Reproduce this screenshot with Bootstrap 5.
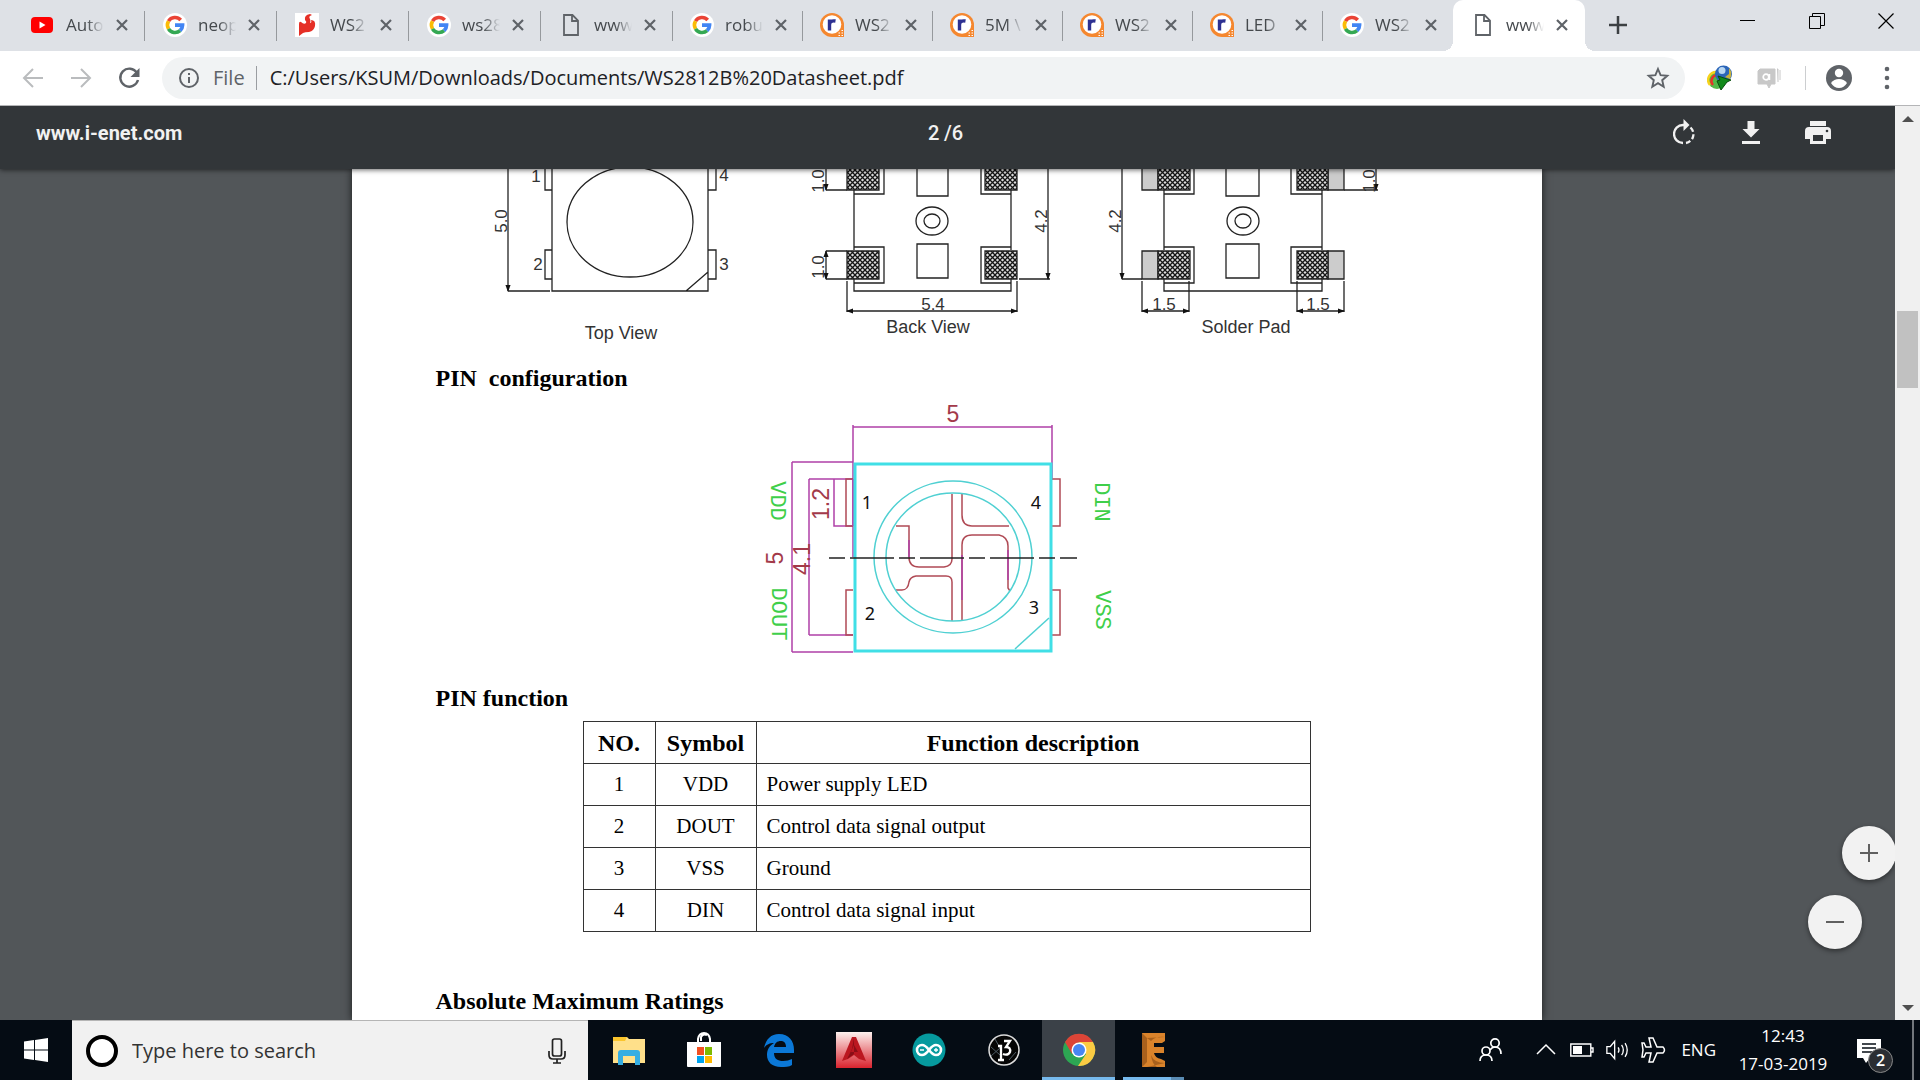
<!DOCTYPE html>
<html lang="en">
<head>
<meta charset="utf-8">
<meta name="viewport" content="width=device-width, initial-scale=1">
<title>WS2812B Datasheet.pdf</title>
<link href="https://cdn.jsdelivr.net/npm/bootstrap@5.3.0/dist/css/bootstrap.min.css" rel="stylesheet">
<style>
body{font-family:"Open Sans","Noto Sans",sans-serif;color:#202124;background:#525659}
svg{display:block;flex:none}
button{border:0;background:none;padding:0;color:inherit}
.tabstrip{height:51px;background:#dee1e6;padding-left:13px}
.tab{width:130px;height:51px;padding:0 15px 2px 17px;position:relative;color:#5f6368}
.tab.wide{width:132px;padding-left:18px}
.tab::after{content:"";position:absolute;right:0;top:11px;height:30px;width:1px;background:#96999d}
.tab.last::after{display:none}
.tab .fav{width:24px;height:24px}
.tab a{width:38px;margin:0 11px;font-size:17px;line-height:24px;overflow:hidden;white-space:nowrap;color:#45494d;text-decoration:none;-webkit-mask-image:linear-gradient(90deg,#000 55%,transparent);mask-image:linear-gradient(90deg,#000 55%,transparent)}
.tab.on{background:#fff;border-radius:10px 10px 0 0}
.tab.on::after,.tab.on::before{content:"";display:block;position:absolute;top:auto;bottom:0;width:10px;height:10px;background:radial-gradient(circle at 0 0,transparent 10px,#fff 10px)}
.tab.on::before{left:-10px}
.tab.on::after{right:-10px;background:radial-gradient(circle at 100% 0,transparent 10px,#fff 10px)}
.newtab{margin:0 0 2px 24px}
.winbtn{width:69px;height:42px;color:#000}
.addr{height:55px;background:#fff;border-bottom:1px solid #b4b5b7;color:#5f6368;padding-bottom:1px}
.navbtns{width:162px;padding-left:21px;gap:24px}
.omni{height:42px;border-radius:21px;background:#f1f3f4;padding:0 15px 0 15px}
.omni input{border:0;background:transparent;outline:0;font-size:20px;color:#202124;padding:0;min-width:0;margin-left:13px}
.omni .scheme{font-size:20px;margin:0 11px 0 12px}
.vline{width:1px;height:24px;background:#9a9da1}
.exts{width:235px;padding-left:22px}
.pdfbar{height:63px;background:#323639;color:#f1f1f1;font-family:Roboto,sans-serif;font-size:20px;padding:0 64px 10px 36px;box-shadow:0 1px 5px rgba(0,0,0,.6);z-index:3}
.pdfbar .doctitle{font-weight:700}
.pdfbar .pager{font-weight:500}
.pdfbar input{width:12px;border:0;padding:0;background:transparent;color:inherit;font:inherit}
.pdftools{gap:42px}
.viewer{min-height:0;background:#525659;padding-right:2px}
.sheet{width:1190px;max-width:100%;margin:0 auto;background:#fff;color:#000;font-family:"Liberation Serif",serif;box-shadow:0 0 8px rgba(0,0,0,.7);min-height:100%}
.sheet h2{font-size:24px;line-height:32px;font-weight:700;margin:16px 84px 0}
.sheet h2.gap-top{margin-top:53px}
.pins{width:728px;margin:7px 0 0 231px;border-collapse:collapse}
.pins th,.pins td{border:1px solid #333;height:42px;padding:0 10px;text-align:center;font-size:21px;line-height:30px}
.pins td{padding-bottom:2px}
.pins th{font-size:24px}
.pins td:last-child{text-align:left}
.figtext{font-family:"Liberation Sans",sans-serif;font-size:18px;fill:#333;text-anchor:middle}
.figtext .dim{font-size:17px}
.cad{font-family:"Liberation Mono",monospace;font-size:22px;text-anchor:middle}
.cad .dimred{font-family:"Liberation Sans",sans-serif;fill:#a33a4a;font-size:23px}
.cad .num{font-family:"Noto Sans",sans-serif;fill:#111;font-size:18px}
.sbar{width:25px;background:#f0f0f0;padding:8px 2px 7px;z-index:4}
.sbar .thumb{height:77px;background:#c1c1c1;margin-top:187px}
.zoombtn{position:absolute;width:54px;height:54px;border-radius:50%;background:#f2f2f2;color:#606060;box-shadow:0 2px 5px rgba(0,0,0,.45)}
.zin{right:-1px;bottom:140px}
.zout{right:33px;bottom:71px}
.taskbar{height:60px;background:#050c14;color:#fff}
.start{width:72px}
.search{width:516px;background:#f1f1f1;border-top:1px solid #b5b5b5;padding:0 22px 0 14px;color:#222;margin-right:4px}
.search input{border:0;background:transparent;outline:0;font-size:20px;padding:0;margin-left:14px;min-width:0}
.search input::placeholder{color:#333;opacity:1}
.app{width:73px;margin-right:2px;position:relative}
.app.run{background:#3b4148}
.app.run::after{content:"";position:absolute;left:0;right:0;bottom:0;height:3px;background:#76b9ed}
.app.multi::after{content:"";position:absolute;left:6px;width:61px;bottom:0;height:3px;background:linear-gradient(90deg,#76b9ed 48px,#5a8cb4 48px)}
.tray{font-size:17px;padding-right:6px}
.lang{margin:0 12px 0 15px}
.clock{width:110px;line-height:28px;text-align:center}
.note{position:relative;margin-left:19px;width:55px}
.note .count{position:absolute;left:11px;top:11px;width:25px;height:25px;border-radius:50%;background:#2b2e33;border:1px solid #888;font-size:16px;line-height:22px;font-weight:600;text-align:center}
.desk{width:2px;background:#72777c}
</style>
<script src="https://cdn.jsdelivr.net/npm/bootstrap@5.3.0/dist/js/bootstrap.bundle.min.js"></script>
</head>
<body class="vh-100 overflow-hidden d-flex flex-column">
<svg width="0" height="0" class="position-absolute" aria-hidden="true">
<defs>
<symbol id="x" viewBox="0 0 14 14"><path d="M2 2l10 10M12 2L2 12" stroke="#5f6368" stroke-width="2.2"/></symbol>
<symbol id="g" viewBox="0 0 24 24"><circle cx="12" cy="12" r="12" fill="#fff"/><g fill="none" stroke-width="3.6"><path d="M17.7 7A7.6 7.6 0 0 0 5.5 8.2" stroke="#ea4335"/><path d="M5.5 8.2a7.6 7.6 0 0 0 0 7.6" stroke="#fbbc05"/><path d="M5.5 15.8a7.6 7.6 0 0 0 11.6 1.8" stroke="#34a853"/><path d="M17.1 17.6a7.6 7.6 0 0 0 2.5-5.5H12" stroke="#4285f4"/></g></symbol>
<symbol id="r" viewBox="0 0 24 24"><path d="M12 0a12 12 0 1 0 0 24h12V12A12 12 0 0 0 12 0z" fill="#f5872f"/><circle cx="12" cy="11.500" r="9.300" fill="#fff"/><path d="M9.500 17.500V6.500M9.500 12q0-5 6-4" fill="none" stroke="#2e3192" stroke-width="3.400"/><path d="M18.500 20h1.500M21.500 20h1.500M18.500 22.500h1.500M21.500 22.500h1.500M21.500 17.500h1.500" stroke="#fff" stroke-width="1.200"/></symbol>
<symbol id="doc" viewBox="0 0 24 24"><path d="M5 2h8.500L19 7.500V22H5z M13 2v6h6" fill="none" stroke="#5f6368" stroke-width="1.800"/></symbol>
<pattern id="hatch" width="5" height="5" patternUnits="userSpaceOnUse"><rect width="5" height="5" fill="#ddd"/><path d="M0 0l5 5M5 0L0 5" stroke="#151515" stroke-width="1.300"/></pattern>
<marker id="ar" viewBox="0 0 8 8" refX="7" refY="4" markerWidth="7" markerHeight="7" markerUnits="userSpaceOnUse" orient="auto-start-reverse"><path d="M0 1l8 3-8 3z" fill="#111"/></marker>
</defs>
</svg>

<header>
<div class="tabstrip d-flex">
<div class="tab wide d-flex align-items-center"><svg class="fav" viewBox="0 0 24 24"><rect y="4" x="0" width="22" height="16" rx="4" fill="#f00"/><path d="M8.500 8.500l6 3.500-6 3.500z" fill="#fff"/></svg><a href="#">Auto</a><button aria-label="Close tab"><svg width="14" height="14"><use href="#x"/></svg></button></div>
<div class="tab wide d-flex align-items-center"><svg class="fav"><use href="#g"/></svg><a href="#">neop</a><button aria-label="Close tab"><svg width="14" height="14"><use href="#x"/></svg></button></div>
<div class="tab wide d-flex align-items-center"><svg class="fav" viewBox="0 0 24 24"><path fill="#fff" d="M0 0h24v24H0z"/><path d="M4 23V11q0-3 2-2 3 3 5 1 1-1-1-3-1-5 5-6l2 1q-4 1-2 4 1 2 0 4 2 0 1-3 5 0 4 6-1 5-6 6-4 0-6 1z" fill="#e52f26"/></svg><a href="#">WS2</a><button aria-label="Close tab"><svg width="14" height="14"><use href="#x"/></svg></button></div>
<div class="tab wide d-flex align-items-center"><svg class="fav"><use href="#g"/></svg><a href="#">ws28</a><button aria-label="Close tab"><svg width="14" height="14"><use href="#x"/></svg></button></div>
<div class="tab wide d-flex align-items-center"><svg class="fav"><use href="#doc"/></svg><a href="#">www</a><button aria-label="Close tab"><svg width="14" height="14"><use href="#x"/></svg></button></div>
<div class="tab d-flex align-items-center"><svg class="fav"><use href="#g"/></svg><a href="#">robu</a><button aria-label="Close tab"><svg width="14" height="14"><use href="#x"/></svg></button></div>
<div class="tab d-flex align-items-center"><svg class="fav"><use href="#r"/></svg><a href="#">WS2</a><button aria-label="Close tab"><svg width="14" height="14"><use href="#x"/></svg></button></div>
<div class="tab d-flex align-items-center"><svg class="fav"><use href="#r"/></svg><a href="#">5M \</a><button aria-label="Close tab"><svg width="14" height="14"><use href="#x"/></svg></button></div>
<div class="tab d-flex align-items-center"><svg class="fav"><use href="#r"/></svg><a href="#">WS2</a><button aria-label="Close tab"><svg width="14" height="14"><use href="#x"/></svg></button></div>
<div class="tab d-flex align-items-center"><svg class="fav"><use href="#r"/></svg><a href="#">LED</a><button aria-label="Close tab"><svg width="14" height="14"><use href="#x"/></svg></button></div>
<div class="tab last d-flex align-items-center"><svg class="fav"><use href="#g"/></svg><a href="#">WS2</a><button aria-label="Close tab"><svg width="14" height="14"><use href="#x"/></svg></button></div>
<div class="tab wide on d-flex align-items-center"><svg class="fav"><use href="#doc"/></svg><a href="#">www</a><button aria-label="Close tab"><svg width="14" height="14"><use href="#x"/></svg></button></div>
<button class="newtab" aria-label="New tab"><svg width="18" height="18" viewBox="0 0 18 18"><path d="M9 0v18M0 9h18" stroke="#3c4043" stroke-width="2.500"/></svg></button>
<div class="d-flex ms-auto">
<button class="winbtn d-flex align-items-center justify-content-center" aria-label="Minimize"><svg width="16" height="16"><path d="M0 7.500h15" stroke="#000"/></svg></button>
<button class="winbtn d-flex align-items-center justify-content-center" aria-label="Restore"><svg width="16" height="16"><path d="M.5 3.500h11v12H.5zM3.500 3V.5h12v12H12" fill="none" stroke="#000"/></svg></button>
<button class="winbtn d-flex align-items-center justify-content-center" aria-label="Close"><svg width="16" height="16"><path d="M.5.5l15 15M15.500.5l-15 15" stroke="#000" stroke-width="1.200"/></svg></button>
</div>
</div>

<div class="addr d-flex align-items-center">
<div class="navbtns d-flex align-items-center">
<button aria-label="Back"><svg width="24" height="24" viewBox="0 0 24 24" fill="none" stroke="#babcbe" stroke-width="2"><path d="M22 12H4M12 3l-9 9 9 9"/></svg></button>
<button aria-label="Forward"><svg width="24" height="24" viewBox="0 0 24 24" fill="none" stroke="#babcbe" stroke-width="2"><path d="M2 12h18M12 3l9 9-9 9"/></svg></button>
<button aria-label="Reload"><svg width="24" height="24" viewBox="0 0 24 24"><path d="M20 7A9 9 0 1 0 21 14" fill="none" stroke="#5f6368" stroke-width="2.400"/><path d="M22.500 2v9h-9z" fill="#5f6368"/></svg></button>
</div>
<div class="omni d-flex align-items-center flex-grow-1">
<svg width="24" height="24" viewBox="0 0 24 24"><circle cx="12" cy="12" r="9" fill="none" stroke="#5f6368" stroke-width="2"/><path d="M12 11v6M12 7v2" stroke="#5f6368" stroke-width="2"/></svg>
<label class="scheme" for="url">File</label><span class="vline"></span>
<input id="url" class="flex-grow-1" value="C:/Users/KSUM/Downloads/Documents/WS2812B%20Datasheet.pdf">
<button aria-label="Bookmark"><svg width="24" height="24" viewBox="0 0 24 24"><path d="M12 3l2.600 6.200 6.700.6-5.100 4.400 1.500 6.500L12 17.200l-5.700 3.500 1.500-6.500-5.100-4.400 6.700-.6z" fill="none" stroke="#5f6368" stroke-width="1.900"/></svg></button>
</div>
<div class="exts d-flex align-items-center">
<button aria-label="Download manager"><svg width="26" height="26" viewBox="0 0 26 26"><circle cx="10" cy="15" r="9" fill="#54b948"/><path d="M3 20A8 8 0 0 1 10 7" fill="none" stroke="#f6d21c" stroke-width="2.500"/><path d="M6 20a6 6 0 0 1 4-10" fill="none" stroke="#e6322a" stroke-width="2.500"/><circle cx="16.500" cy="9" r="8.500" fill="#2c66b8"/><circle cx="15" cy="5.500" r="3.500" fill="#b9d7f2"/><path d="M22 3q4 5 1 11l-5-2 4-3z" fill="#c9b23a"/><path d="M11 11l9 3 4 1-4 2-6 8-4-9 3-1z" fill="#128a1b" stroke="#074d0d"/></svg></button>
<button class="ms-4" aria-label="Extension"><svg width="24" height="24" viewBox="0 0 24 24"><path d="M3 3h15v15h-4l-2 4-2-4H1V5zM20 3h1v13M23 4v10" fill="#c8c8c8" stroke="#c8c8c8"/><circle cx="9" cy="11" r="2.800" fill="none" stroke="#fff" stroke-width="1.700"/><path d="M12.500 8v6" stroke="#fff" stroke-width="1.500"/></svg></button>
<span class="vline ms-4 me-2 opacity-50"></span>
<button class="ms-2" aria-label="Profile"><svg width="34" height="28" viewBox="0 0 34 28"><circle cx="17" cy="14" r="13" fill="#5f6368"/><circle cx="17" cy="9" r="4.200" fill="#fff"/><path d="M9 19q3-4 8-4t8 4q-3 5-8 5t-8-5" fill="#fff"/></svg></button>
<button class="ms-4" aria-label="Menu"><svg width="14" height="24" viewBox="0 0 14 24" fill="#5f6368"><circle cx="7" cy="3" r="2.300"/><circle cx="7" cy="12" r="2.300"/><circle cx="7" cy="21" r="2.300"/></svg></button>
</div>
</div>
</header>

<main class="d-flex flex-grow-1 overflow-hidden">
<div class="d-flex flex-column flex-grow-1 position-relative overflow-hidden">
<div class="pdfbar d-flex align-items-center flex-shrink-0">
<div class="doctitle col text-start">www.i-enet.com</div>
<div class="pager d-flex ms-4"><input id="pg" value="2" aria-label="Page"><label for="pg" class="ms-1">/6</label></div>
<div class="pdftools col d-flex justify-content-end">
<button aria-label="Rotate"><svg width="24" height="28" viewBox="0 0 24 28"><path d="M10 24a9 9 0 0 1 0-18h2" fill="none" stroke="#f1f1f1" stroke-width="2.300"/><path d="M10.500 0l6 6-6 6z" fill="#f1f1f1"/><path d="M17.500 8.500a9 9 0 0 1-4.500 15.500" fill="none" stroke="#f1f1f1" stroke-width="2.300" stroke-dasharray="5 2.500"/></svg></button>
<button aria-label="Download"><svg width="24" height="28" viewBox="0 0 24 28"><path d="M8.500 2h7v8h5L12 18.500 3.500 10h5zM3 22h18v3H3z" fill="#f1f1f1"/></svg></button>
<button aria-label="Print"><svg width="26" height="28" viewBox="0 0 26 28"><path d="M5 2h16v5H5zM4 8h18q4 0 4 4v8h-5v5H5v-5H0v-8q0-4 4-4zm4 8v6h10v-6z" fill="#f1f1f1" fill-rule="evenodd"/><circle cx="22" cy="12" r="1.300" fill="#323639"/></svg></button>
</div>
</div>

<div class="viewer flex-grow-1">
<article class="sheet">
<svg class="w-100" viewBox="352 169 1190 177" role="img" aria-label="LED package dimensions">
<g fill="none" stroke="#222" stroke-width="1.300">
<path d="M508 160V291" marker-end="url(#ar)"/><path d="M508 291h42M552 160v131h156V160M686 291l22-19M552 190h-7v-30M552 250h-7v29h7M708 190h8v-30M708 250h8v29h-8"/>
<ellipse cx="630" cy="222" rx="63" ry="55"/>
<path d="M854 190v60M854 279v12h157v-12M1011 190v60"/>
<path d="M854 194h30v-30M854 247h30v36h-30M1011 194h-30v-30M1011 247h-30v36h30"/>
<path d="M917 160v36h31v-36M917 244h31v34h-31z"/><ellipse cx="932" cy="221" rx="16" ry="14"/><ellipse cx="932" cy="221" rx="8" ry="7"/>
<path d="M826 190h21M826 251h21M826 279h21M847 281v31M1017 281v31M1019 279h31"/>
<path d="M826 160v30" marker-end="url(#ar)"/><path d="M826 251v28" marker-end="url(#ar)" marker-start="url(#ar)"/><path d="M847 311h170" marker-end="url(#ar)" marker-start="url(#ar)"/><path d="M1048 160v119" marker-end="url(#ar)"/>
<path d="M1122 160v119" marker-end="url(#ar)"/>
<path d="M1164 190v60M1164 279v12h158v-12M1322 190v60M1164 194h30v-30M1164 247h30v36h-30M1322 194h-31v-30M1322 247h-31v36h31"/>
<path d="M1226 160v36h33v-36M1226 244h33v34h-33z"/><ellipse cx="1243" cy="221" rx="16" ry="14"/><ellipse cx="1243" cy="221" rx="8" ry="7"/>
<path d="M1122 279h20M1142 281v31M1189 281v31M1297 281v31M1344 281v31M1344 190h34"/>
<path d="M1142 311h47" marker-end="url(#ar)" marker-start="url(#ar)"/><path d="M1297 311h47" marker-end="url(#ar)" marker-start="url(#ar)"/><path d="M1376 160v30" marker-end="url(#ar)"/>
<g fill="#ccc"><path d="M1142 160h16v30h-16zM1142 251h16v28h-16zM1328 160h16v30h-16zM1328 251h16v28h-16z"/></g>
<g fill="url(#hatch)"><path d="M847 160h32v30h-32zM847 251h32v28h-32zM985 160h32v30h-32zM985 251h32v28h-32zM1158 160h32v30h-32zM1158 251h32v28h-32zM1297 160h31v30h-31zM1297 251h31v28h-31z"/></g>
</g>
<g class="figtext">
<text x="621" y="339">Top View</text><text x="928" y="333">Back View</text><text x="1246" y="333">Solder Pad</text>
<g class="dim"><text x="536" y="182">1</text><text x="724" y="181">4</text><text x="538" y="270">2</text><text x="724" y="270">3</text><text x="933" y="310">5.4</text><text x="1164" y="310">1.5</text><text x="1318" y="310">1.5</text>
<text transform="translate(507 221) rotate(-90)">5.0</text><text transform="translate(824 181) rotate(-90)">1.0</text><text transform="translate(824 267) rotate(-90)">1.0</text><text transform="translate(1047 221) rotate(-90)">4.2</text><text transform="translate(1121 221) rotate(-90)">4.2</text><text transform="translate(1375 181) rotate(-90)">1.0</text></g>
</g>
</svg>
<h2>PIN&nbsp; configuration</h2>
<svg class="mx-auto" width="400" height="272" viewBox="747 394 400 272" role="img" aria-label="Pin configuration">
<g fill="none" stroke-width="1.500">
<path d="M853 425v132M1052 425v55M853 427h199M792 462v190M792 462h61M792 652h61M809 479v156M809 479h44M809 635h44M834 479v47h19" stroke="#b040a8"/>
<path d="M853 479h-7v47h7M853 590h-7v45h7M1052 479h8v47h-8M1052 590h8v45h-8M896 526h13v31q0 10 10 10h25q8-1 8-8v-65M962 494v21q0 11 10 11h37M962 620v-75q0-10 10-10h27q9 2 9 11v42l2 3M952 621v-39q0-6-6-6h-30q-6 1-7 6-1 8-7 8h-6" stroke="#b04a55"/>
<path d="M962 600v-45M853 479v47M909 540v17M1008 550v30" stroke="#b040a8"/>
<rect x="855" y="464" width="196" height="187" stroke="#40dfe6" stroke-width="3"/>
<ellipse cx="953" cy="557" rx="79" ry="76" stroke="#4fd0d2"/><ellipse cx="953" cy="557" rx="67" ry="64" stroke="#4fd0d2"/><path d="M1015 649l34-31" stroke="#4fd0d2"/>
<path d="M829 558h248" stroke="#222" stroke-dasharray="16 5 44 5"/>
</g>
<g class="cad">
<g fill="#3fcf4a"><text transform="translate(771 501) rotate(90)">VDD</text><text transform="translate(772 614) rotate(90)">DOUT</text><text transform="translate(1095 502) rotate(90)">DIN</text><text transform="translate(1096 610) rotate(90)">VSS</text></g>
<g class="dimred"><text x="953" y="422">5</text><text transform="translate(829 504) rotate(-90)">1.2</text><text transform="translate(810 559) rotate(-90)">4.1</text><text transform="translate(783 558) rotate(-90)">5</text></g>
<g class="num"><text x="867" y="509">1</text><text x="1036" y="509">4</text><text x="870" y="620">2</text><text x="1034" y="614">3</text></g>
</g>
</svg>
<h2>PIN function</h2>
<table class="pins">
<colgroup><col style="width:72px"><col style="width:101px"><col></colgroup>
<thead><tr><th>NO.</th><th>Symbol</th><th>Function description</th></tr></thead>
<tbody>
<tr><td>1</td><td>VDD</td><td>Power supply LED</td></tr>
<tr><td>2</td><td>DOUT</td><td>Control data signal output</td></tr>
<tr><td>3</td><td>VSS</td><td>Ground</td></tr>
<tr><td>4</td><td>DIN</td><td>Control data signal input</td></tr>
</tbody>
</table>
<h2 class="gap-top">Absolute Maximum Ratings</h2>
</article>
</div>
<button class="zoombtn zin d-flex align-items-center justify-content-center" aria-label="Zoom in"><svg width="18" height="18"><path d="M9 0v18M0 9h18" stroke="currentColor" stroke-width="2"/></svg></button>
<button class="zoombtn zout d-flex align-items-center justify-content-center" aria-label="Zoom out"><svg width="18" height="18"><path d="M0 9h18" stroke="currentColor" stroke-width="2"/></svg></button>
</div>
<div class="sbar d-flex flex-column flex-shrink-0">
<svg class="mx-auto" width="12" height="10"><path d="M0 8l6-6 6 6z" fill="#505050"/></svg>
<div class="thumb"></div>
<svg class="mx-auto mt-auto" width="12" height="10"><path d="M0 2l6 6 6-6z" fill="#505050"/></svg>
</div>
</main>

<footer class="taskbar d-flex flex-shrink-0">
<button class="start d-flex align-items-center justify-content-center" aria-label="Start"><svg width="24" height="24" viewBox="0 0 24 24" fill="#fff"><path d="M0 3.500l10-1.400V11.500H0zM11 2l13-2v11.500H11zM0 12.500h10v9.400L0 20.500zM11 12.500h13V24l-13-2z"/></svg></button>
<div class="search d-flex align-items-center">
<svg width="32" height="32"><circle cx="16" cy="16" r="14" fill="#fff" stroke="#000" stroke-width="4"/></svg>
<input class="flex-grow-1" type="text" placeholder="Type here to search" aria-label="Type here to search">
<svg width="18" height="26" viewBox="0 0 18 26" fill="none" stroke="#222" stroke-width="1.700"><rect x="4.500" y="1" width="9" height="17" rx="2"/><path d="M1 13v4q0 4 4 4h8q4 0 4-4v-4M9 21v4M5 25h8"/></svg>
</div>
<button class="app d-flex align-items-center justify-content-center" aria-label="File Explorer"><svg width="34" height="34" viewBox="0 0 34 34"><path d="M1 4h14l2 2h16v24H1z" fill="#ffe08a"/><path d="M1 4h14l-2 4H1z" fill="#fbc52c"/><path d="M6 32V20q0-3 3-3h16q3 0 3 3v12h-5v-9H11v9z" fill="#36aee2"/></svg></button>
<button class="app d-flex align-items-center justify-content-center" aria-label="Store"><svg width="36" height="38" viewBox="0 0 36 38"><path d="M12 12V8q1-6 6-6t6 6v4M15 10V6q2-4 6-2" fill="none" stroke="#fff" stroke-width="2"/><path d="M1 11h34v24q0 1-1 1H2q-1 0-1-1z" fill="#fff"/><path d="M11 16h7v8h-7z" fill="#f25022"/><path d="M19 16h7v8h-7z" fill="#7fba00"/><path d="M11 25h7v7h-7z" fill="#00a4ef"/><path d="M19 25h7v7h-7z" fill="#ffb900"/></svg></button>
<button class="app d-flex align-items-center justify-content-center" aria-label="Edge"><svg width="32" height="34" viewBox="0 0 32 34"><path d="M1 15C3 6 8 1 16 1c10 0 15 7 15 16v3H11c0 6 4 8 9 8 4 0 6-1 9-2v6c-3 2-7 2-11 2C9 34 4 29 4 22c0-5 2-9 7-12-5 0-8 2-10 5zm10-1h12c0-4-2-6-5-6-4 0-6 2-7 6z" fill="#0b78d7" fill-rule="evenodd"/></svg></button>
<button class="app d-flex align-items-center justify-content-center" aria-label="AutoCAD"><svg width="36" height="36" viewBox="0 0 36 36"><linearGradient id="ac" x2="0" y2="1"><stop stop-color="#fdf1ee"/><stop offset="1" stop-color="#d9232e"/></linearGradient><path fill="url(#ac)" d="M0 0h36v36H0z"/><path d="M16 5h4l10 24-7-2-5-4-6 4-6 2z" fill="#bb1720"/><path d="M18 6l-2 11-5 10 7-5zM18 13l4 7h-7z" fill="#8b0e17"/></svg></button>
<button class="app d-flex align-items-center justify-content-center" aria-label="Arduino"><svg width="34" height="34" viewBox="0 0 34 34"><circle cx="17" cy="17" r="16.500" fill="#069a9e"/><path d="M17 17c-3-4-5-5-7-5a5 5 0 0 0 0 10c2 0 4-1 7-5s5-5 7-5a5 5 0 0 1 0 10c-2 0-4-1-7-5z" fill="none" stroke="#fff" stroke-width="2.600"/><path d="M8 17h4M22 17h4M24 15v4" stroke="#fff" stroke-width="1.300"/></svg></button>
<button class="app d-flex align-items-center justify-content-center" aria-label="Processing"><svg width="34" height="34" viewBox="0 0 34 34"><circle cx="17" cy="17" r="15" fill="#050505" stroke="#ddd" stroke-width="1.500"/><path d="M4 14l9 8M8 6l5 9M4 23l9-8M22 27l7-8" stroke="#4c5962"/><path d="M11 13h3v14M11 27h6M17 8h6l-4 6q5 0 4 5-2 4-7 2" fill="none" stroke="#fff" stroke-width="2.300"/></svg></button>
<button class="app run d-flex align-items-center justify-content-center" aria-label="Chrome"><svg width="34" height="34" viewBox="0 0 34 34"><circle cx="17" cy="17" r="16" fill="#2da653"/><path d="M3 9A16 16 0 0 1 31 9H17l-7 12z" fill="#dc4437"/><path d="M31 9H17l7 12-8 12A16 16 0 0 0 31 9z" fill="#fbcb43"/><circle cx="17" cy="17" r="7.500" fill="#fff"/><circle cx="17" cy="17" r="6" fill="#4886f2"/></svg></button>
<button class="app multi d-flex align-items-center justify-content-center" aria-label="Eagle"><svg width="26" height="36" viewBox="0 0 26 36"><path d="M1 1h23v8l-3 2h-8v4h10v6H13q1 5 7 6l4 2v6H1z" fill="#d9832b"/><path d="M1 1l5 5v24l-5 5zM24 5q-9-1-14 4l-4-3zM24 31q-11 0-14-8 1 9 6 12H6z" fill="#a8601c"/></svg></button>
<div class="tray d-flex align-items-center ms-auto">
<svg width="26" height="26" viewBox="0 0 26 26" fill="none" stroke="#fff" stroke-width="1.700"><circle cx="17" cy="6" r="4.200"/><circle cx="8" cy="14" r="4"/><path d="M2 24q0-6 6-6t6 6M12 13q2-3 5-3 6 0 6 7"/></svg>
<svg class="ms-4" width="38" height="20" viewBox="0 0 38 20"><path d="M9 14l9-9 9 9" fill="none" stroke="#fff" stroke-width="1.500"/></svg>
<svg class="ms-1" width="24" height="24" viewBox="0 0 24 24"><path d="M.8 6h20v12H.8zM21 10h2v4h-2" fill="none" stroke="#fff" stroke-width="1.400"/><path d="M3 8h9v8H3z" fill="#fff"/></svg>
<svg class="ms-2 me-1 ps-1" width="30" height="24" viewBox="0 0 30 24" fill="none" stroke="#fff" stroke-width="1.500"><path d="M1 8h4l5-6v20l-5-6H1zM14 9q2 3 0 6M18 6q4 6 0 12M22 4q5 8 0 16"/></svg>
<svg class="ms-1" width="26" height="26" viewBox="0 0 26 26"><path d="M9 1h4l4 9h6q3 3 0 6h-6l-4 9H9l2-9H6l-2 4H2l1-7-1-7h2l2 4h5z" fill="none" stroke="#fff" stroke-width="1.500"/></svg>
<span class="lang">ENG</span>
<div class="clock">12:43<br>17-03-2019</div>
<button class="note" aria-label="Notifications"><svg width="24" height="26" viewBox="0 0 24 26"><path d="M0 2h24v19H13l-4 5-3-5H0z" fill="#fff"/><path d="M5 7h14M5 11h14M5 15h14" stroke="#050c14" stroke-width="1.300"/></svg><span class="count">2</span></button>
<span class="desk align-self-stretch"></span>
</div>
</footer>
</body>
</html>
